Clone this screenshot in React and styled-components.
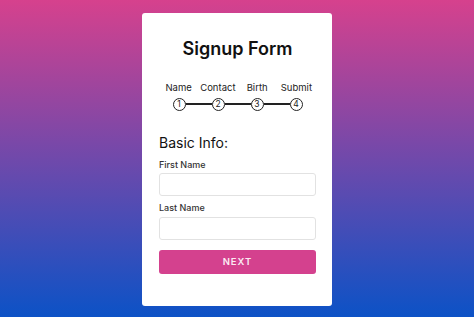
import React from "react";
import styled, { createGlobalStyle } from "styled-components";

const Global = createGlobalStyle`
  html, body { margin: 0; padding: 0; }
  body {
    font-family: Inter, "Noto Sans", Arial, sans-serif;
    background: linear-gradient(to bottom, #d6418d 0%, #7a48a8 45%, #0c52c6 100%);
    min-height: 317px;
  }
`;

const Page = styled.div`
  height: 317px;
  display: flex;
  align-items: center;
  justify-content: center;
`;

const Card = styled.div`
  width: 190px;
  height: 293px;
  box-sizing: border-box;
  background: #fff;
  border-radius: 3px;
  padding: 25px 16px 0 17px;
  display: flex;
  flex-direction: column;
  margin-top: 1px;
`;

const Title = styled.h1`
  margin: 0;
  font-size: 18px;
  line-height: 22px;
  font-weight: 600;
  color: #111;
  text-align: center;
`;

const Labels = styled.div`
  margin-top: 22px;
  display: grid;
  grid-template-columns: repeat(4, 1fr);
`;

const StepLabel = styled.span`
  font-size: 9.5px;
  line-height: 12px;
  color: #222;
  text-align: center;
`;

const Track = styled.div`
  margin-top: 4px;
  display: flex;
  align-items: center;
  justify-content: center;
`;

const Dot = styled.span`
  width: 13px;
  height: 13px;
  box-sizing: border-box;
  border: 1px solid #222;
  border-radius: 50%;
  display: flex;
  align-items: center;
  justify-content: center;
  font-size: 8.5px;
  line-height: 1;
  color: #222;
`;

const Bar = styled.span`
  width: 26px;
  height: 1.5px;
  background: #222;
`;

const Section = styled.h2`
  margin: 23px 0 0;
  font-size: 14px;
  line-height: 18px;
  font-weight: 400;
  color: #111;
`;

const Label = styled.label`
  margin-top: ${(p) => p.$top}px;
  font-size: 9px;
  line-height: 12px;
  font-weight: 500;
  color: #333;
`;

const Input = styled.input`
  margin-top: ${(p) => p.$top}px;
  height: 23px;
  box-sizing: border-box;
  border: 1px solid #e2e2e2;
  border-radius: 3px;
  outline: none;
  width: 100%;
`;

const Button = styled.button`
  margin-top: 10px;
  height: 24px;
  border: none;
  border-radius: 3px;
  background: #d4418e;
  color: #fbeaf3;
  font-family: inherit;
  font-size: 9.5px;
  font-weight: 600;
  letter-spacing: 1px;
  width: 100%;
`;

const steps = ["Name", "Contact", "Birth", "Submit"];

export default function App() {
  return (
    <>
      <Global />
      <Page>
        <Card>
          <Title>Signup Form</Title>
          <Labels>
            {steps.map((s) => (
              <StepLabel key={s}>{s}</StepLabel>
            ))}
          </Labels>
          <Track>
            {steps.map((s, i) => (
              <React.Fragment key={s}>
                {i > 0 && <Bar />}
                <Dot>{i + 1}</Dot>
              </React.Fragment>
            ))}
          </Track>
          <Section>Basic Info:</Section>
          <Label $top={7}>First Name</Label>
          <Input $top={2} />
          <Label $top={6}>Last Name</Label>
          <Input $top={3} />
          <Button>NEXT</Button>
        </Card>
      </Page>
    </>
  );
}
